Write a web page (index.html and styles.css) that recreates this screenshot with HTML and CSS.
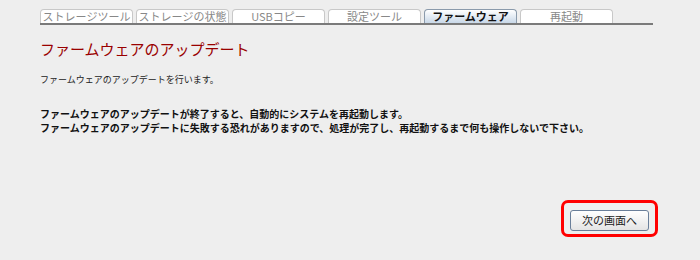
FILE: index.html
```html
<!DOCTYPE html>
<html lang="ja">

<head>
    <meta charset="UTF-8">
    <title>ファームウェア</title>
    <link rel="stylesheet" href="styles.css">
</head>

<body>
    <nav class="tabs">
        <span class="tab">ストレージツール</span>
        <span class="tab">ストレージの状態</span>
        <span class="tab">USBコピー</span>
        <span class="tab">設定ツール</span>
        <span class="tab active">ファームウェア</span>
        <span class="tab">再起動</span>
    </nav>
    <main class="content">
        <h1>ファームウェアのアップデート</h1>
        <p class="lead">ファームウェアのアップデートを行います。</p>
        <p class="notice">
            <span>ファームウェアのアップデートが終了すると、自動的にシステムを再起動します。</span>
            <span>ファームウェアのアップデートに失敗する恐れがありますので、処理が完了し、再起動するまで何も操作しないで下さい。</span>
        </p>
        <div class="actions">
            <span class="mark"><button type="button">次の画面へ</button></span>
        </div>
    </main>
</body>

</html>
```

FILE: styles.css
```css
body {
    font-family: "Noto Sans CJK JP", "Liberation Sans", sans-serif;
    background-color: #eeeeee;
    margin: 0;
    padding: 0;
}

.tabs {
    display: flex;
    margin: 9px 47px 0 40px;
    border-bottom: 2px solid #7a7a7a;
}

.tab {
    box-sizing: border-box;
    flex: none;
    width: 93px;
    height: 14px;
    margin-right: 3px;
    background-color: #fff;
    border: 1px solid #c8c8c8;
    border-bottom: none;
    border-radius: 4px 4px 0 0;
    color: #888;
    font-size: 11px;
    line-height: 13px;
    text-align: center;
}

.tab.active {
    background: linear-gradient(#ffffff, #c9d8e8);
    border-color: #8a9aab;
    color: #111;
    font-weight: bold;
}

.content {
    padding: 0 40px;
}

h1 {
    color: #990000;
    font-size: 15px;
    font-weight: normal;
    margin: 13px 0 0;
}

.lead {
    font-size: 9px;
    color: #222;
    margin: 14px 0 0;
}

.notice {
    font-size: 10px;
    font-weight: bold;
    color: #111;
    line-height: 14px;
    margin: 21px 0 0;
}

.notice span {
    display: block;
}

.actions {
    display: flex;
    justify-content: flex-end;
    margin: 65px 2px 0 0;
}

.mark {
    border: 3px solid #ff0000;
    border-radius: 7px;
    padding: 3px 6px;
}

button {
    width: 79px;
    height: 21px;
    font-family: inherit;
    font-size: 11px;
    color: #222;
    background: linear-gradient(#ffffff, #e4e4e4);
    border: 1px solid #6a7f9a;
    border-radius: 3px;
    padding: 0;
}
```
